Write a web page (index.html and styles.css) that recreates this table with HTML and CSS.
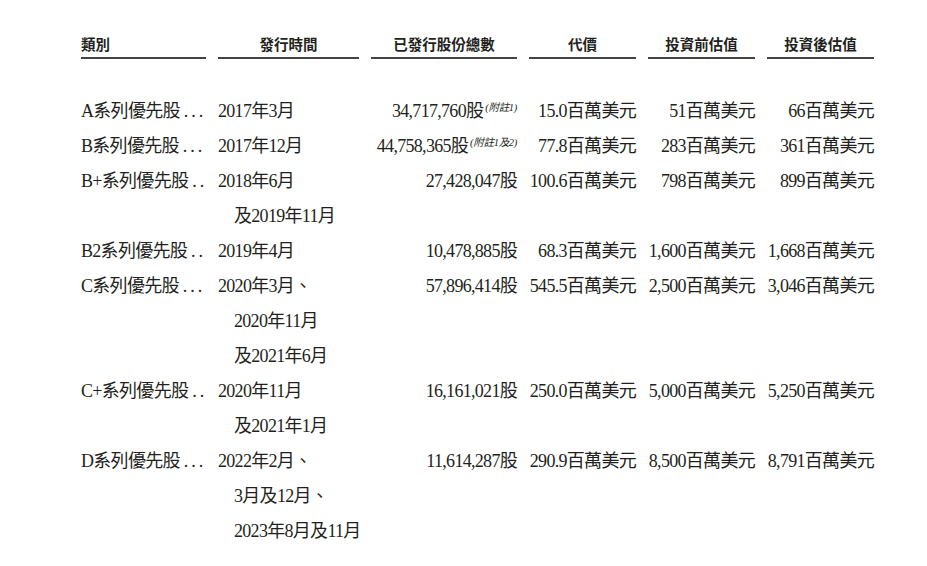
FILE: index.html
```html
<!DOCTYPE html>
<html lang="zh-Hant">
<head>
<meta charset="utf-8">
<title>優先股</title>
<link rel="stylesheet" href="styles.css">
</head>
<body>
<div class="table">
  <div class="th left">類別</div>
  <div class="th">發行時間</div>
  <div class="th">已發行股份總數</div>
  <div class="th">代價</div>
  <div class="th">投資前估值</div>
  <div class="th">投資後估值</div>

  <div class="td">A系列優先股<span class="dots">...</span></div>
  <div class="td"><div>2017年3月</div></div>
  <div class="td num">34,717,760股<span class="note">(附註1)</span></div>
  <div class="td num">15.0百萬美元</div>
  <div class="td num">51百萬美元</div>
  <div class="td num">66百萬美元</div>

  <div class="td">B系列優先股<span class="dots">...</span></div>
  <div class="td"><div>2017年12月</div></div>
  <div class="td num">44,758,365股<span class="note">(附註1及2)</span></div>
  <div class="td num">77.8百萬美元</div>
  <div class="td num">283百萬美元</div>
  <div class="td num">361百萬美元</div>

  <div class="td">B+系列優先股<span class="dots">..</span></div>
  <div class="td"><div>2018年6月</div><div class="cont">及2019年11月</div></div>
  <div class="td num">27,428,047股</div>
  <div class="td num">100.6百萬美元</div>
  <div class="td num">798百萬美元</div>
  <div class="td num">899百萬美元</div>

  <div class="td">B2系列優先股<span class="dots">..</span></div>
  <div class="td"><div>2019年4月</div></div>
  <div class="td num">10,478,885股</div>
  <div class="td num">68.3百萬美元</div>
  <div class="td num">1,600百萬美元</div>
  <div class="td num">1,668百萬美元</div>

  <div class="td">C系列優先股<span class="dots">...</span></div>
  <div class="td"><div>2020年3月、</div><div class="cont">2020年11月</div><div class="cont">及2021年6月</div></div>
  <div class="td num">57,896,414股</div>
  <div class="td num">545.5百萬美元</div>
  <div class="td num">2,500百萬美元</div>
  <div class="td num">3,046百萬美元</div>

  <div class="td">C+系列優先股<span class="dots">..</span></div>
  <div class="td"><div>2020年11月</div><div class="cont">及2021年1月</div></div>
  <div class="td num">16,161,021股</div>
  <div class="td num">250.0百萬美元</div>
  <div class="td num">5,000百萬美元</div>
  <div class="td num">5,250百萬美元</div>

  <div class="td">D系列優先股<span class="dots">...</span></div>
  <div class="td"><div>2022年2月、</div><div class="cont">3月及12月、</div><div class="cont">2023年8月及11月</div></div>
  <div class="td num">11,614,287股</div>
  <div class="td num">290.9百萬美元</div>
  <div class="td num">8,500百萬美元</div>
  <div class="td num">8,791百萬美元</div>
</div>
</body>
</html>
```

FILE: styles.css
```css
html, body {
  margin: 0;
  padding: 0;
  background: #ffffff;
}

body {
  color: #231f20;
  font-family: "Liberation Serif", "Noto Sans CJK TC", serif;
}

.table {
  display: grid;
  grid-template-columns: 125px 141px 146px 107px 107px 107px;
  column-gap: 12px;
  padding: 34px 0 0 81px;
  width: 793px;
}

.th {
  font-family: "Noto Sans CJK TC", "Noto Sans", sans-serif;
  font-weight: 700;
  font-size: 14.5px;
  line-height: 20px;
  text-align: center;
  padding-bottom: 3px;
  border-bottom: 2px solid #444444;
  margin-bottom: 35px;
  color: #231f20;
}

.th.left {
  text-align: left;
}

.td {
  font-size: 18px;
  line-height: 35px;
  letter-spacing: -0.7px;
  white-space: nowrap;
}

.td.num {
  text-align: right;
}

.cont {
  padding-left: 16px;
}

.dots {
  margin-left: 4px;
  letter-spacing: 3px;
}

.note {
  font-size: 10.5px;
  font-style: italic;
  letter-spacing: -0.3px;
  vertical-align: 0.6em;
  line-height: 1;
  margin-left: 2px;
}
```
